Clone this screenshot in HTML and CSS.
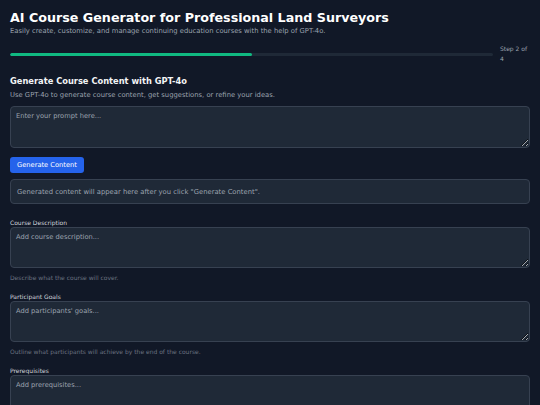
FILE: index.html
```html
<!DOCTYPE html>
<html lang="en">
<head>
<meta charset="utf-8">
<title>AI Course Generator</title>
<link rel="stylesheet" href="styles.css">
</head>
<body>
<main class="page">
  <header class="header">
    <h1 class="title">AI Course Generator for Professional Land Surveyors</h1>
    <p class="subtitle">Easily create, customize, and manage continuing education courses with the help of GPT-4o.</p>
  </header>

  <div class="progress-row">
    <div class="progress-track"><div class="progress-fill" style="width: 50%"></div></div>
    <span class="step">Step 2 of 4</span>
  </div>

  <section class="generator">
    <h2 class="section-title">Generate Course Content with GPT-4o</h2>
    <p class="section-desc">Use GPT-4o to generate course content, get suggestions, or refine your ideas.</p>
    <textarea class="input prompt" placeholder="Enter your prompt here..."></textarea>
    <button class="btn" type="button">Generate Content</button>
    <div class="output">Generated content will appear here after you click "Generate Content".</div>
  </section>

  <div class="field">
    <label class="label">Course Description</label>
    <textarea class="input area" placeholder="Add course description..."></textarea>
    <p class="help">Describe what the course will cover.</p>
  </div>

  <div class="field">
    <label class="label">Participant Goals</label>
    <textarea class="input area" placeholder="Add participants' goals..."></textarea>
    <p class="help">Outline what participants will achieve by the end of the course.</p>
  </div>

  <div class="field">
    <label class="label">Prerequisites</label>
    <textarea class="input area" placeholder="Add prerequisites..."></textarea>
  </div>
</main>
</body>
</html>
```

FILE: styles.css
```css
* { box-sizing: border-box; }

html, body {
  margin: 0;
  background: #111827;
  font-family: "DejaVu Sans", Verdana, sans-serif;
  color: #e5e7eb;
}

.page {
  padding: 9px 10px 10px;
}

.title {
  margin: 0;
  font-size: 12.7px;
  line-height: 18px;
  font-weight: bold;
  color: #ffffff;
}

.subtitle {
  margin: 0;
  font-size: 6.8px;
  line-height: 9px;
  color: #9ca3af;
}

.progress-row {
  display: flex;
  align-items: center;
  gap: 7px;
  margin-top: 8px;
}

.progress-track {
  flex: 1;
  height: 3px;
  border-radius: 2px;
  background: #1f2937;
  overflow: hidden;
}

.progress-fill {
  height: 100%;
  background: #10b981;
  border-radius: 2px;
}

.step {
  width: 30px;
  font-size: 6px;
  line-height: 10px;
  color: #9ca3af;
}

.generator {
  margin-top: 12px;
}

.section-title {
  margin: 0;
  font-size: 8.3px;
  line-height: 10px;
  font-weight: bold;
  color: #f3f4f6;
}

.section-desc {
  margin: 5px 0 0;
  font-size: 6.8px;
  line-height: 9px;
  color: #9ca3af;
}

.input {
  display: block;
  width: 100%;
  margin: 0;
  background: #1f2937;
  border: 1px solid #374151;
  border-radius: 4px;
  color: #e5e7eb;
  font-family: "DejaVu Sans", Verdana, sans-serif;
  font-size: 6.7px;
  line-height: 9px;
  padding: 5px 5px;
  outline: none;
}

.input::placeholder {
  color: #9ca3af;
}

.prompt {
  margin-top: 6px;
  height: 42px;
}

.btn {
  display: block;
  margin-top: 9px;
  height: 16px;
  padding: 0 7px;
  background: #2563eb;
  color: #ffffff;
  border: none;
  border-radius: 3px;
  font-family: "DejaVu Sans", Verdana, sans-serif;
  font-size: 6.7px;
}

.output {
  margin-top: 6px;
  height: 25px;
  display: flex;
  align-items: center;
  padding: 0 6px;
  background: #1f2937;
  border: 1px solid #374151;
  border-radius: 4px;
  font-size: 6.8px;
  color: #9ca3af;
}

.field {
  margin-bottom: 10.5px;
}

.generator + .field {
  margin-top: 14px;
}

.label {
  display: block;
  font-size: 6px;
  line-height: 9px;
  margin-bottom: 0;
  color: #d1d5db;
}

.area {
  height: 41px;
}

.help {
  margin: 4.5px 0 0;
  font-size: 6px;
  line-height: 9px;
  color: #6b7280;
}
```
